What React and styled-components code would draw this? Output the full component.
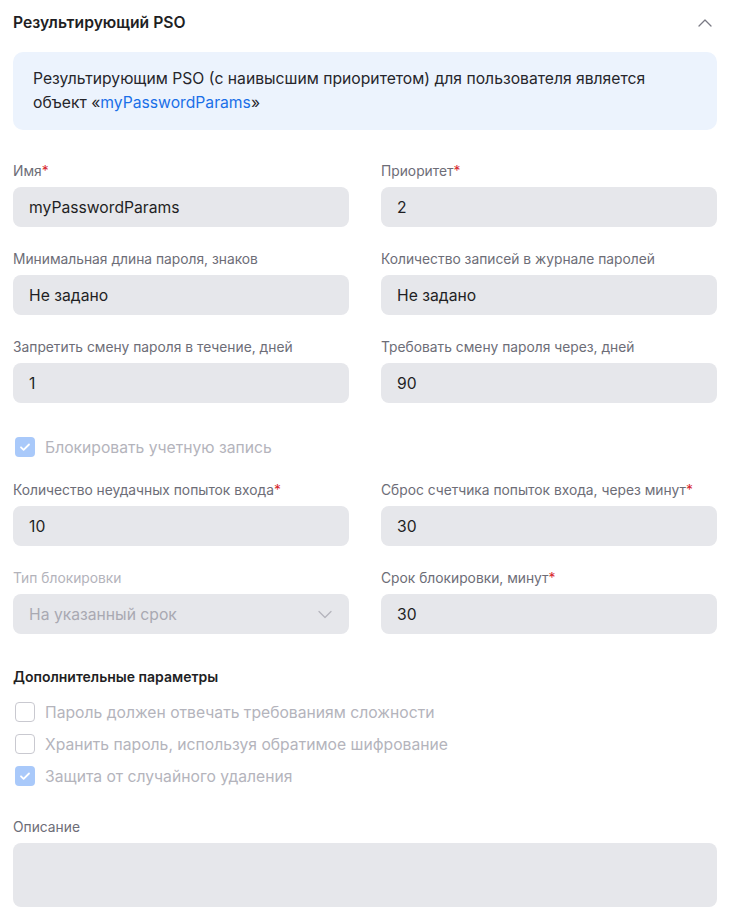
import React from "react";
import styled, { createGlobalStyle } from "styled-components";

const GlobalStyle = createGlobalStyle`
  body {
    margin: 0;
    background: #ffffff;
    font-family: Inter, "Noto Sans", sans-serif;
    color: #1f1f24;
  }
`;

const Page = styled.div`
  width: 704px;
  padding: 0 15px 15px 13px;
`;

const Header = styled.div`
  height: 46px;
  display: flex;
  align-items: center;
  justify-content: space-between;
  margin-bottom: 6px;
`;

const Title = styled.h2`
  margin: 0;
  font-size: 15.7px;
  font-weight: 600;
  line-height: 20px;
  color: #1f1f24;
`;

const Collapse = styled.button`
  border: 0;
  background: none;
  padding: 0;
  margin-right: 4px;
  display: flex;
  color: #7a7a84;
`;

const Info = styled.div`
  background: #ecf3fd;
  border-radius: 10px;
  padding: 15px 20px;
  font-size: 15.7px;
  line-height: 24px;
  color: #26262b;
`;

const Link = styled.a`
  color: #1a6fe8;
  text-decoration: none;
`;

const Grid = styled.div`
  display: grid;
  grid-template-columns: 1fr 1fr;
  column-gap: 32px;
  row-gap: 22px;
  margin-top: ${(p) => p.$top || 0}px;
`;

const Field = styled.div`
  display: flex;
  flex-direction: column;
  gap: 6px;
`;

const Label = styled.label`
  font-size: 13.8px;
  line-height: 20px;
  color: ${(p) => (p.$disabled ? "#b3b3bb" : "#6d6d77")};
`;

const Star = styled.span`
  color: #d7262d;
`;

const Input = styled.div`
  height: 40px;
  box-sizing: border-box;
  border-radius: 8px;
  background: #e6e7eb;
  padding: 0 16px;
  display: flex;
  align-items: center;
  justify-content: space-between;
  font-size: 15.7px;
  color: ${(p) => (p.$disabled ? "#a9a9b2" : "#1f1f24")};
`;

const TextArea = styled.div`
  height: 64px;
  border-radius: 8px;
  background: #e6e7eb;
`;

const CheckRow = styled.div`
  display: flex;
  align-items: center;
  gap: 10px;
  height: 20px;
  margin-left: 2px;
  font-size: 15.7px;
  color: #b4b4bc;
`;

const CheckList = styled.div`
  display: flex;
  flex-direction: column;
  gap: 12px;
  margin-top: 15px;
`;

const Box = styled.span`
  width: 20px;
  height: 20px;
  box-sizing: border-box;
  border-radius: 4px;
  display: flex;
  align-items: center;
  justify-content: center;
  background: ${(p) => (p.$checked ? "#a9c9fa" : "#ffffff")};
  border: ${(p) => (p.$checked ? "none" : "1.5px solid #c9c9d0")};
`;

const Subtitle = styled.h3`
  margin: 33px 0 0;
  font-size: 14px;
  font-weight: 600;
  line-height: 20px;
  color: #1f1f24;
`;

const Block = styled.div`
  margin-top: ${(p) => p.$top || 0}px;
`;

const Quoted = styled.span`
  white-space: nowrap;
`;

function Check({ checked, children }) {
  return (
    <CheckRow>
      <Box $checked={checked}>
        {checked && (
          <svg width="14" height="14" viewBox="0 0 14 14" fill="none">
            <path d="M3 7.3l2.6 2.6L11 4.5" stroke="#fff" strokeWidth="1.8" strokeLinecap="round" strokeLinejoin="round" />
          </svg>
        )}
      </Box>
      {children}
    </CheckRow>
  );
}

function TextField({ label, required, value, disabled, select }) {
  return (
    <Field>
      <Label $disabled={disabled}>
        {label}
        {required && <Star>*</Star>}
      </Label>
      <Input $disabled={disabled}>
        {value}
        {select && (
          <svg width="16" height="16" viewBox="0 0 16 16" fill="none">
            <path d="M2 5.5l6 6 6-6" stroke="#b5b5bd" strokeWidth="1.3" strokeLinecap="round" strokeLinejoin="round" />
          </svg>
        )}
      </Input>
    </Field>
  );
}

export default function App() {
  return (
    <Page>
      <GlobalStyle />
      <Header>
        <Title>Результирующий PSO</Title>
        <Collapse>
          <svg width="16" height="16" viewBox="0 0 16 16" fill="none">
            <path d="M2 11l6-6 6 6" stroke="#7a7a84" strokeWidth="1.3" strokeLinecap="round" strokeLinejoin="round" />
          </svg>
        </Collapse>
      </Header>

      <Info>
        Результирующим PSO (с наивысшим приоритетом) для пользователя является объект{" "}
        <Quoted>
          «<Link href="#">myPasswordParams</Link>»
        </Quoted>
      </Info>

      <Grid $top={31}>
        <TextField label="Имя" required value="myPasswordParams" />
        <TextField label="Приоритет" required value="2" />
        <TextField label="Минимальная длина пароля, знаков" value="Не задано" />
        <TextField label="Количество записей в журнале паролей" value="Не задано" />
        <TextField label="Запретить смену пароля в течение, дней" value="1" />
        <TextField label="Требовать смену пароля через, дней" value="90" />
      </Grid>

      <Block $top={34}>
        <Check checked>Блокировать учетную запись</Check>
      </Block>

      <Grid $top={23}>
        <TextField label="Количество неудачных попыток входа" required value="10" />
        <TextField label="Сброс счетчика попыток входа, через минут" required value="30" />
        <TextField label="Тип блокировки" disabled select value="На указанный срок" />
        <TextField label="Срок блокировки, минут" required value="30" />
      </Grid>

      <Subtitle>Дополнительные параметры</Subtitle>
      <CheckList>
        <Check>Пароль должен отвечать требованиям сложности</Check>
        <Check>Хранить пароль, используя обратимое шифрование</Check>
        <Check checked>Защита от случайного удаления</Check>
      </CheckList>

      <Block $top={31}>
        <Field>
          <Label>Описание</Label>
          <TextArea />
        </Field>
      </Block>
    </Page>
  );
}
